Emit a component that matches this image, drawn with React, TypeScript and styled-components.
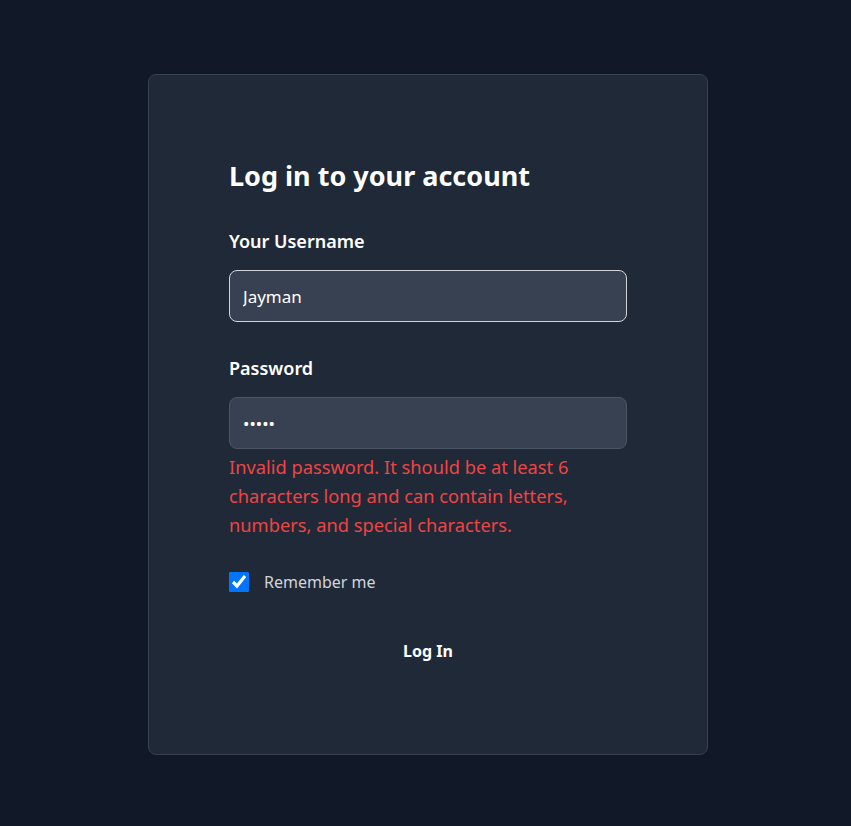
import React, { useState } from "react";
import styled, { createGlobalStyle } from "styled-components";

const Global = createGlobalStyle`
  html, body { margin: 0; padding: 0; background: #111827; }
  body { font-family: "Noto Sans", "Open Sans", sans-serif; }
  * { box-sizing: border-box; }
`;

const Page = styled.div`
  min-height: 826px;
  display: flex;
  justify-content: center;
  align-items: flex-start;
  padding: 74px 0 0 5px;
  background: #111827;
`;

const Card = styled.form`
  width: 560px;
  padding: 80px 80px 79px;
  background: #1f2937;
  border: 1px solid #374151;
  border-radius: 8px;
  display: flex;
  flex-direction: column;
`;

const Title = styled.h1`
  margin: 0 0 30px;
  font-size: 27px;
  line-height: 42px;
  font-weight: 700;
  color: #ffffff;
`;

const Label = styled.label`
  display: block;
  font-size: 18px;
  line-height: 28px;
  font-weight: 600;
  color: #ffffff;
  margin-bottom: 15px;
`;

const Field = styled.div<{ $gap?: number }>`
  display: flex;
  flex-direction: column;
  margin-top: ${(p) => p.$gap ?? 0}px;
`;

const Input = styled.input<{ $focused?: boolean }>`
  width: 100%;
  height: 52px;
  padding: 0 13px;
  background: #374151;
  border: 1px solid ${(p) => (p.$focused ? "#d1d5db" : "#4b5563")};
  border-radius: 8px;
  color: #ffffff;
  font-family: inherit;
  font-size: 17px;
  outline: none;
`;

const ErrorText = styled.p`
  margin: 3px 0 0;
  color: #ef4444;
  font-size: 18.3px;
  line-height: 29px;
`;

const CheckRow = styled.label`
  display: flex;
  align-items: center;
  gap: 15px;
  margin-top: 33px;
  color: #d1d5db;
  font-size: 16px;
  line-height: 20px;
`;

const Check = styled.input`
  width: 20px;
  height: 20px;
  margin: 0;
  accent-color: #0075ff;
`;

const Button = styled.button`
  align-self: center;
  margin-top: 35px;
  padding: 12px 16px;
  background: transparent;
  border: none;
  color: #ffffff;
  font-family: inherit;
  font-size: 16px;
  line-height: 24px;
  font-weight: 700;
  cursor: pointer;
`;

export default function App() {
  const [user, setUser] = useState("Jayman");
  const [pass, setPass] = useState("12345");
  const [remember, setRemember] = useState(true);
  return (
    <>
      <Global />
      <Page>
        <Card onSubmit={(e) => e.preventDefault()}>
          <Title>Log in to your account</Title>
          <Field>
            <Label htmlFor="username">Your Username</Label>
            <Input
              id="username"
              $focused
              value={user}
              onChange={(e) => setUser(e.target.value)}
            />
          </Field>
          <Field $gap={32}>
            <Label htmlFor="password">Password</Label>
            <Input
              id="password"
              type="password"
              value={pass}
              onChange={(e) => setPass(e.target.value)}
            />
            <ErrorText>
              Invalid password. It should be at least 6 characters long and can
              contain letters, numbers, and special characters.
            </ErrorText>
          </Field>
          <CheckRow>
            <Check
              type="checkbox"
              checked={remember}
              onChange={(e) => setRemember(e.target.checked)}
            />
            Remember me
          </CheckRow>
          <Button type="submit">Log In</Button>
        </Card>
      </Page>
    </>
  );
}
